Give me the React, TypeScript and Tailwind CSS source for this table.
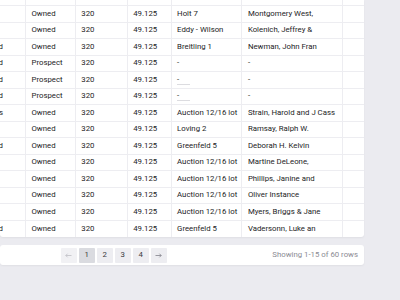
import React from "react";

type Row = {
  kind: string;
  status: string;
  acres: string;
  price: string;
  tract: string;
  owner: string;
  blank?: boolean;
};

const rows: Row[] = [
  { kind: "Leased", status: "Owned", acres: "320", price: "49.125", tract: "Holt 6", owner: "Lacey Jowett, Horst" },
  { kind: "", status: "Owned", acres: "320", price: "49.125", tract: "Holt 7", owner: "Montgomery West," },
  { kind: "", status: "Owned", acres: "320", price: "49.125", tract: "Eddy - Wilson", owner: "Kolenich, Jeffrey &" },
  { kind: "Acquired", status: "Owned", acres: "320", price: "49.125", tract: "Breitling 1", owner: "Newman, John Fran" },
  { kind: "Acquired", status: "Prospect", acres: "320", price: "49.125", tract: "-", owner: "-" },
  { kind: "Acquired", status: "Prospect", acres: "320", price: "49.125", tract: "-", owner: "-", blank: true },
  { kind: "Acquired", status: "Prospect", acres: "320", price: "49.125", tract: "-", owner: "-", blank: true },
  { kind: "Options", status: "Owned", acres: "320", price: "49.125", tract: "Auction 12/16 lot", owner: "Strain, Harold and J Cass" },
  { kind: "", status: "Owned", acres: "320", price: "49.125", tract: "Loving 2", owner: "Ramsay, Ralph W." },
  { kind: "Acquired", status: "Owned", acres: "320", price: "49.125", tract: "Greenfeld 5", owner: "Deborah H. Kelvin" },
  { kind: "", status: "Owned", acres: "320", price: "49.125", tract: "Auction 12/16 lot", owner: "Martine DeLeone," },
  { kind: "", status: "Owned", acres: "320", price: "49.125", tract: "Auction 12/16 lot", owner: "Phillips, Janine and" },
  { kind: "", status: "Owned", acres: "320", price: "49.125", tract: "Auction 12/16 lot", owner: "Oliver Instance" },
  { kind: "", status: "Owned", acres: "320", price: "49.125", tract: "Auction 12/16 lot", owner: "Myers, Briggs & Jane" },
  { kind: "Acquired", status: "Owned", acres: "320", price: "49.125", tract: "Greenfeld 5", owner: "Vadersonn, Luke an" },
];

const cell = "flex items-center overflow-hidden whitespace-nowrap border-r border-[#ededf1]";

const TableRow = ({ row, last }: { row: Row; last: boolean }) => {
  return (
    <div className={`flex h-[16.5px] ${last ? "" : "border-b border-[#ededf1]"}`}>
      <div className={`${cell} w-[26px] justify-end pr-[22px]`}>{row.kind}</div>
      <div className={`${cell} w-[50px] pl-[5.5px]`}>{row.status}</div>
      <div className={`${cell} w-[52px] pl-[5.5px]`}>{row.acres}</div>
      <div className={`${cell} w-[44px] pl-[5.5px]`}>{row.price}</div>
      <div className={`${cell} w-[71px] pl-[5.5px]`}>
        {row.blank ? (
          <div className="flex flex-col">
            <span className="leading-[9px]">-</span>
            <span className="h-[1px] w-[13px] bg-[#dcdce0]" />
          </div>
        ) : (
          row.tract
        )}
      </div>
      <div className={`${cell} w-[101px] pl-[5.5px]`}>{row.owner}</div>
      <div className="w-[21px]" />
    </div>
  );
};

export default function App() {
  return (
    <div
      className="h-[300px] w-[400px] overflow-hidden bg-[#ebebf0] text-[7.8px] text-[#1c1c1e]"
      style={{ fontFamily: "Roboto, 'Liberation Sans', sans-serif" }}
    >
      <div className="w-[364px] overflow-hidden rounded-b-[3px] bg-white shadow-[0_1px_2px_rgba(0,0,0,0.05)]">
        <div className="-mt-[10.5px]">
          {rows.map((r, i) => (
            <TableRow key={i} row={r} last={i === rows.length - 1} />
          ))}
        </div>
      </div>

      <div className="mt-[8.3px] flex h-[20px] w-[364px] items-center justify-between rounded-[3px] bg-white pl-[61px] pr-[6px] shadow-[0_1px_2px_rgba(0,0,0,0.05)]">
        <div className="flex gap-[2.5px]">
          <button className="flex h-[14.5px] w-[15.5px] items-center justify-center rounded-[1px] bg-[#f1f1f4] text-[#c4c4ca]">
            <svg width="7" height="5" viewBox="0 0 7 5" fill="none" stroke="currentColor" strokeWidth="0.9">
              <path d="M6.5 2.5H0.8M2.6 0.7L0.8 2.5l1.8 1.8" />
            </svg>
          </button>
          {["1", "2", "3", "4"].map((n) => (
            <button
              key={n}
              className={`flex h-[14.5px] w-[15.5px] items-center justify-center rounded-[1px] text-[7.8px] text-[#3a3a40] ${
                n === "1" ? "bg-[#dadbe0]" : "bg-[#ededf1]"
              }`}
            >
              {n}
            </button>
          ))}
          <button className="flex h-[14.5px] w-[15.5px] items-center justify-center rounded-[1px] bg-[#ededf1] text-[#8d8d95]">
            <svg width="7" height="5" viewBox="0 0 7 5" fill="none" stroke="currentColor" strokeWidth="0.9">
              <path d="M0.5 2.5H6.2M4.4 0.7l1.8 1.8-1.8 1.8" />
            </svg>
          </button>
        </div>
        <span className="text-[7.8px] text-[#8b8b93]">Showing 1-15 of 60 rows</span>
      </div>
    </div>
  );
}
